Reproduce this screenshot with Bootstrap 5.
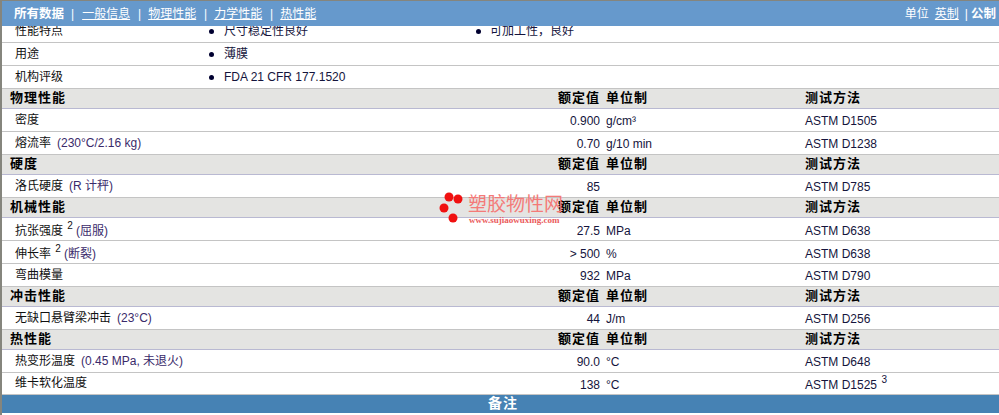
<!DOCTYPE html>
<html lang="zh">
<head>
<meta charset="utf-8">
<title>塑胶物性</title>
<link rel="stylesheet" href="https://cdn.jsdelivr.net/npm/bootstrap@5.3.0/dist/css/bootstrap.min.css">
<style>
html,body{height:415px;overflow:hidden}
body{background:#fff;font-family:"Liberation Sans","Noto Sans CJK SC",sans-serif;font-size:12px;color:#111}
.sheet{border-left:2px solid #85857d;height:415px;position:relative;overflow:hidden}
.topbar{height:26px;background:#6699cc;border-top:1px solid #85857d;margin-left:-2px;color:#fff;padding:0 3px 0 14px;font-size:12px;position:relative;z-index:2;line-height:26px}
.topbar a{color:#fff;text-decoration:underline}
.topbar b{font-size:12.5px}
.topbar .sep{margin:0 7px 0 7.9px}
.topbar .sep-first{margin:0 8px 0 7px}
.topbar .gap1{margin:0 0 0 6px}
.topbar .gap2{margin:0 3px 0 6px}
.datagrid{table-layout:fixed;width:997px;border-collapse:collapse;margin-top:-7px;position:relative}
.datagrid td{padding:0;height:23px;border-bottom:1px solid #c4c4c4;vertical-align:middle;line-height:22px;color:#14143c}
.datagrid td.lab{padding-left:13px;color:#111}
.datagrid tr.clipped td{padding-top:2px;line-height:20px}
.datagrid .cond{color:#3a2a6a;margin-left:6px}
.datagrid .cond-tight{color:#3a2a6a;margin-left:2px}
.datagrid td.val{text-align:right;padding-right:3px;padding-top:2px;line-height:20px}
.datagrid td.unit{padding-left:3px;padding-top:2px;line-height:20px}
.datagrid td.meth{padding-left:2px;padding-top:2px;line-height:20px}
.datagrid tr.noted td{padding-top:4px;line-height:18px}
.datagrid sup{font-size:10px;top:-.6em;margin:0 1px;line-height:0}
.datagrid tr.head td{height:20px;line-height:18px;padding-top:0;background:#e4e4e2;border-top:1px solid #c9c9c9;border-bottom:1px solid #b9b9d2;font-weight:700;font-size:13px;letter-spacing:1px;color:#000}
.datagrid tr.head td.first{padding-left:8px}
.datagrid tr.closing td{height:22px;line-height:21px}
.datagrid tr.closing td.val,.datagrid tr.closing td.unit,.datagrid tr.closing td.meth{padding-top:3px;line-height:18px}
.dot{display:inline-block;width:5px;height:5px;border-radius:50%;background:#000030;margin:0 10px 1px 4px}
.dot-alt{margin-right:9px}
.footbar{height:18px;background:#4682b4;color:#fff;font-weight:700;font-size:14px;letter-spacing:1px;line-height:17px;text-align:center;padding-left:5px}
.stamp{position:absolute;left:436px;top:188px;width:130px;height:40px;z-index:1;pointer-events:none}
.stamp svg{position:absolute;left:0;top:0}
.stamp .big{position:absolute;left:30px;top:6px;font-size:19px;line-height:22px;white-space:nowrap;color:#f47a78;letter-spacing:0}
.stamp .url{position:absolute;left:31px;top:26px;font:700 9px/12px "Liberation Serif",serif;white-space:nowrap;color:#ea5a5a}
</style>
</head>
<body>
<div class="sheet">
  <div class="topbar d-flex justify-content-between">
    <div><b>所有数据</b><span class="sep-first">|</span><a href="#">一般信息</a><span class="sep">|</span><a href="#">物理性能</a><span class="sep">|</span><a href="#">力学性能</a><span class="sep">|</span><a href="#">热性能</a></div>
    <div>单位<a class="gap1" href="#">英制</a><span class="gap2">|</span><b>公制</b></div>
  </div>
  <table class="datagrid">
    <colgroup><col style="width:203px"><col style="width:267px"><col style="width:131px"><col style="width:200px"><col style="width:196px"></colgroup>
    <tr class="clipped"><td class="lab">性能特点</td><td><span class="dot"></span>尺寸稳定性良好</td><td colspan="3"><span class="dot dot-alt"></span>可加工性，良好</td></tr>
    <tr><td class="lab">用途</td><td colspan="4"><span class="dot"></span>薄膜</td></tr>
    <tr><td class="lab">机构评级</td><td colspan="4"><span class="dot"></span>FDA 21 CFR 177.1520</td></tr>
    <tr class="head"><td class="first">物理性能</td><td colspan="2" class="val">额定值</td><td class="unit">单位制</td><td class="meth">测试方法</td></tr>
    <tr><td class="lab">密度</td><td colspan="2" class="val">0.900</td><td class="unit">g/cm³</td><td class="meth">ASTM D1505</td></tr>
    <tr><td class="lab">熔流率<span class="cond">(230°C/2.16 kg)</span></td><td colspan="2" class="val">0.70</td><td class="unit">g/10 min</td><td class="meth">ASTM D1238</td></tr>
    <tr class="head"><td class="first">硬度</td><td colspan="2" class="val">额定值</td><td class="unit">单位制</td><td class="meth">测试方法</td></tr>
    <tr><td class="lab">洛氏硬度<span class="cond">(R 计秤)</span></td><td colspan="2" class="val">85</td><td class="unit"></td><td class="meth">ASTM D785</td></tr>
    <tr class="head"><td class="first">机械性能</td><td colspan="2" class="val">额定值</td><td class="unit">单位制</td><td class="meth">测试方法</td></tr>
    <tr class="noted"><td class="lab">抗张强度 <sup>2</sup><span class="cond-tight">(屈服)</span></td><td colspan="2" class="val">27.5</td><td class="unit">MPa</td><td class="meth">ASTM D638</td></tr>
    <tr class="noted"><td class="lab">伸长率 <sup>2</sup><span class="cond-tight">(断裂)</span></td><td colspan="2" class="val">&gt; 500</td><td class="unit">%</td><td class="meth">ASTM D638</td></tr>
    <tr><td class="lab">弯曲模量</td><td colspan="2" class="val">932</td><td class="unit">MPa</td><td class="meth">ASTM D790</td></tr>
    <tr class="head"><td class="first">冲击性能</td><td colspan="2" class="val">额定值</td><td class="unit">单位制</td><td class="meth">测试方法</td></tr>
    <tr><td class="lab">无缺口悬臂梁冲击<span class="cond">(23°C)</span></td><td colspan="2" class="val">44</td><td class="unit">J/m</td><td class="meth">ASTM D256</td></tr>
    <tr class="head"><td class="first">热性能</td><td colspan="2" class="val">额定值</td><td class="unit">单位制</td><td class="meth">测试方法</td></tr>
    <tr><td class="lab">热变形温度<span class="cond">(0.45 MPa, 未退火)</span></td><td colspan="2" class="val">90.0</td><td class="unit">°C</td><td class="meth">ASTM D648</td></tr>
    <tr class="closing"><td class="lab">维卡软化温度</td><td colspan="2" class="val">138</td><td class="unit">°C</td><td class="meth">ASTM D1525 <sup>3</sup></td></tr>
  </table>
  <div class="footbar">备注</div>
  <div class="stamp">
    <svg width="32" height="40" viewBox="0 0 32 40"><circle cx="11" cy="9" r="4.5" fill="#f01010"/><circle cx="20" cy="11" r="4.5" fill="#f01010"/><circle cx="6" cy="20" r="4.5" fill="#f01010"/><circle cx="15" cy="30" r="4.5" fill="#f01010"/></svg>
    <div class="big">塑胶物性网</div>
    <div class="url">www.sujiaowuxing.com</div>
  </div>
</div>
</body>
</html>
